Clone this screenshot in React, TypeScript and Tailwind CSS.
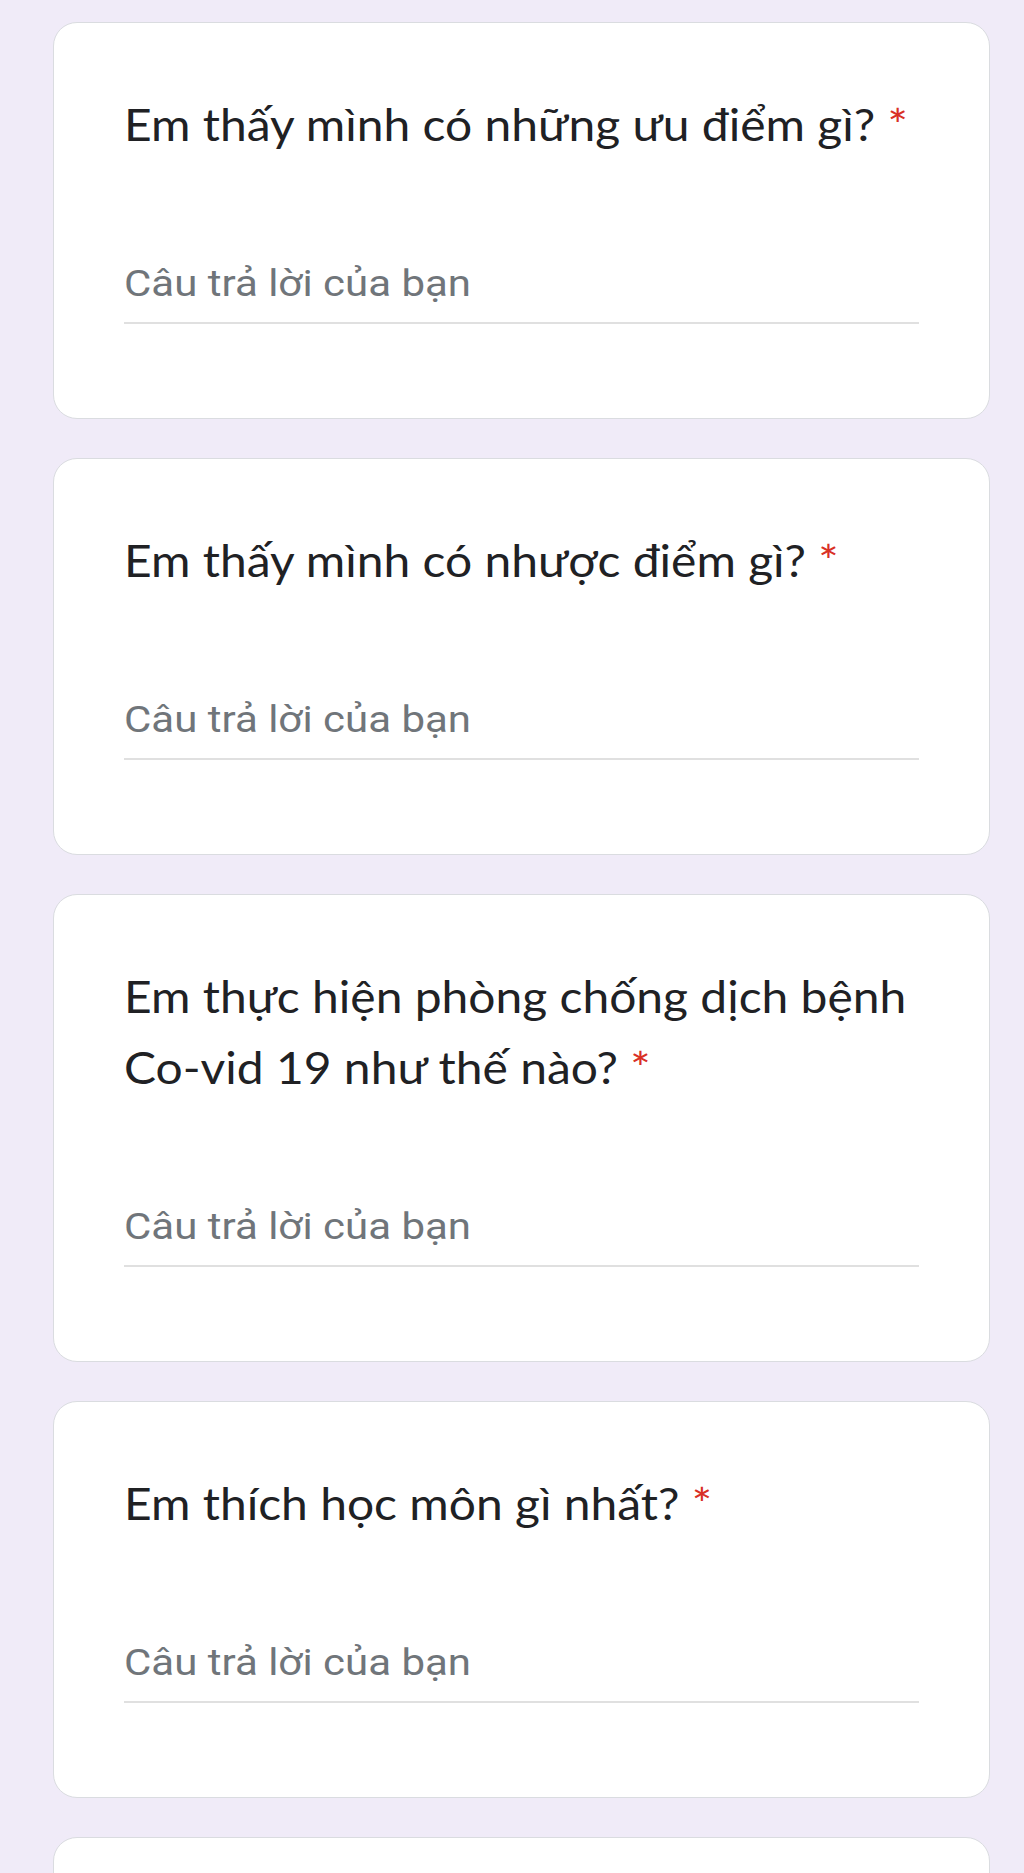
import React from "react";

function Question({ lines }: { lines: string[] }) {
  return (
    <div className="rounded-[24px] border border-[#dadce0] bg-white px-[70px] pt-[66px] pb-[94px]">
      <div
        className="text-[44px] leading-[71px] text-[#202124]"
        style={{ fontFamily: "Lato, 'Open Sans', sans-serif" }}
      >
        {lines.map((l, i) => (
          <div key={i} className="origin-left scale-x-[1.09] whitespace-nowrap">
            {l}
            {i === lines.length - 1 && <span className="text-[#d93025]"> *</span>}
          </div>
        ))}
      </div>
      <div className="mt-[102px] border-b-2 border-[#e0e0e0] pb-[16px]">
        <div
          className="origin-left scale-x-[1.135] whitespace-nowrap text-[37px] leading-[44px] text-[#70757a]"
          style={{ fontFamily: "Roboto, 'Noto Sans', sans-serif" }}
        >
          Câu trả lời của bạn
        </div>
      </div>
    </div>
  );
}

export default function App() {
  return (
    <div className="h-[1873px] w-[1024px] overflow-hidden bg-[#f0ebf8] pt-[22px] pl-[53px] pr-[34px]">
      <div className="flex flex-col gap-[39px]">
        <Question lines={["Em thấy mình có những ưu điểm gì?"]} />
        <Question lines={["Em thấy mình có nhược điểm gì?"]} />
        <Question lines={["Em thực hiện phòng chống dịch bệnh", "Co-vid 19 như thế nào?"]} />
        <Question lines={["Em thích học môn gì nhất?"]} />
        <div className="h-[300px] rounded-[24px] border border-[#dadce0] bg-white" />
      </div>
    </div>
  );
}
